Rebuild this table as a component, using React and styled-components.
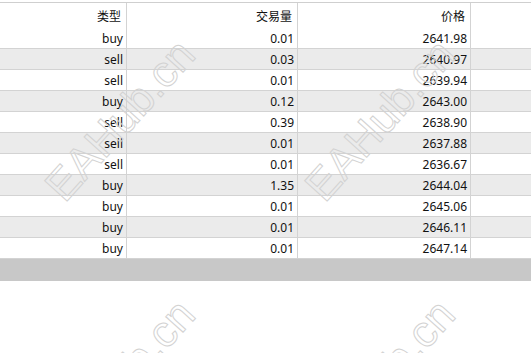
import React from "react";
import styled, { createGlobalStyle } from "styled-components";

const Global = createGlobalStyle`
  html, body { margin: 0; padding: 0; background: #fff; }
  body { font-family: "Noto Sans", "Noto Sans CJK SC", sans-serif; }
`;

const Page = styled.div`
  position: relative;
  width: 531px;
  height: 353px;
  overflow: hidden;
  background: #fff;
  padding-top: 2px;
  box-sizing: border-box;
`;

const Table = styled.div`
  display: flex;
  flex-direction: column;
  border-top: 1px solid #cfcfcf;
`;

const Row = styled.div`
  display: grid;
  grid-template-columns: 127px 171px 173px 1fr;
  height: ${(p) => (p.$header ? "25px" : "21px")};
  background: ${(p) => (p.$alt ? "#ebebeb" : "#fff")};
  border-bottom: ${(p) => (p.$header ? "none" : "1px solid #d3d3d3")};
  box-sizing: border-box;
`;

const Cell = styled.div`
  display: flex;
  align-items: center;
  justify-content: flex-end;
  padding-right: ${(p) => (p.$header ? "5px" : "3px")};
  border-right: ${(p) => (p.$last ? "none" : "1px solid #d3d3d3")};
  font-size: 12px;
  color: #111;
  white-space: nowrap;
  font-family: ${(p) =>
    p.$header ? '"Noto Sans CJK SC", sans-serif' : '"Noto Sans", sans-serif'};
`;

const Band = styled.div`
  height: 22px;
  background: #c8c8c8;
`;

const Watermarks = styled.div`
  position: absolute;
  inset: 0;
  pointer-events: none;
`;

const Mark = styled.span`
  position: absolute;
  transform: translate(-50%, -50%) rotate(-48deg);
  font-family: "Liberation Sans", Arial, sans-serif;
  font-size: 44px;
  line-height: 1;
  color: transparent;
  -webkit-text-stroke: 1px #d2d2d2;
  white-space: nowrap;
`;

const rows = [
  ["buy", "0.01", "2641.98"],
  ["sell", "0.03", "2640.97"],
  ["sell", "0.01", "2639.94"],
  ["buy", "0.12", "2643.00"],
  ["sell", "0.39", "2638.90"],
  ["sell", "0.01", "2637.88"],
  ["sell", "0.01", "2636.67"],
  ["buy", "1.35", "2644.04"],
  ["buy", "0.01", "2645.06"],
  ["buy", "0.01", "2646.11"],
  ["buy", "0.01", "2647.14"],
];

const marks = [
  [120, 120],
  [380, 120],
  [120, 380],
  [380, 380],
];

export default function App() {
  return (
    <>
      <Global />
      <Page>
        <Table>
          <Row $header>
            <Cell $header>类型</Cell>
            <Cell $header>交易量</Cell>
            <Cell $header>价格</Cell>
            <Cell $header $last />
          </Row>
          {rows.map((r, i) => (
            <Row key={i} $alt={i % 2 === 1}>
              <Cell>{r[0]}</Cell>
              <Cell>{r[1]}</Cell>
              <Cell>{r[2]}</Cell>
              <Cell $last />
            </Row>
          ))}
          <Band />
        </Table>
        <Watermarks>
          {marks.map(([x, y], i) => (
            <Mark key={i} style={{ left: x, top: y }}>
              EAHub.cn
            </Mark>
          ))}
        </Watermarks>
      </Page>
    </>
  );
}
